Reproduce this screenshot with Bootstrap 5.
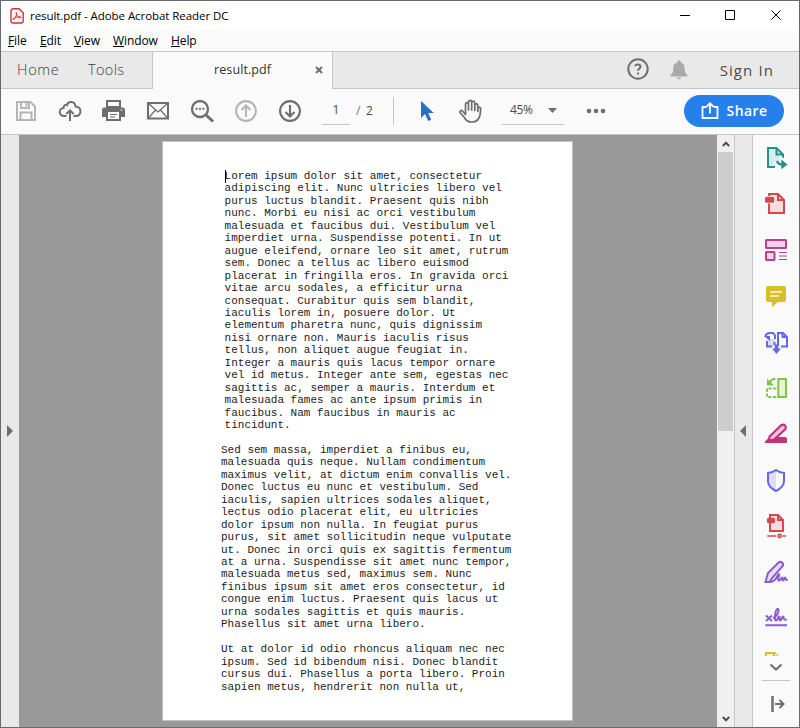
<!DOCTYPE html>
<html lang="en">
<head>
<meta charset="utf-8">
<meta name="viewport" content="width=device-width, initial-scale=1">
<title>result.pdf - Adobe Acrobat Reader DC</title>
<link rel="stylesheet" href="https://cdn.jsdelivr.net/npm/bootstrap@5.3.0/dist/css/bootstrap.min.css">
<style>
  body { font-family: "Open Sans", "Noto Sans", sans-serif; color: #000; }
  svg { display: block; flex: none; overflow: visible; }
  .app-window { height: 728px; border: 1px solid #6b696b; background: #fafafa; }
  .title-row { height: 30px; background: #fff; font-size: 11.5px; padding-left: 9px; padding-right: 17px; }
  .title-text { margin-left: 6px; letter-spacing: -.06px; }
  .menu-row { height: 20px; font-size: 12px; padding-left: 7px; }
  .menu-row a { color: #000; letter-spacing: -.1px; }
  .menu-file { width: 32px; }
  .menu-edit { width: 34px; }
  .menu-view { width: 39px; }
  .menu-window { width: 58px; }
  .tab-row { height: 38px; background: #e9e9e9; border-top: 1px solid #c6c6c6; }
  .tab-rest { border-bottom: 1px solid #c6c6c6; }
  .tab-left { width: 152px; border-right: 1px solid #c6c6c6; padding-left: 16px; font-size: 14.5px; color: #3c3c3c; }
  .tab-left span { font-weight: 300; letter-spacing: .35px; }
  .tab-left .tab-home { width: 71px; letter-spacing: .7px; }
  .tab-file { width: 180px; background: #fafafa; border-right: 1px solid #c6c6c6; font-size: 12.5px; letter-spacing: .1px; color: #323232; padding-left: 61px; padding-right: 9px; }
  .tab-right { padding-right: 25px; color: #4b4b4b; }
  .bell { margin-left: 21px; }
  .sign-in { margin-left: 32px; font-size: 15px; letter-spacing: 1.1px; }
  .tool-row { height: 46px; padding: 0 15px 2px 13px; color: #6e6e6e; border-bottom: 1px solid #c6c6c6; font-size: 12px; }
  .tool-icons { gap: 20px; }
  .field { height: 28px; border-bottom: 1px solid #c6c6c6; color: #4b4b4b; }
  .field-page { width: 28px; margin-left: 20px; }
  .page-slash { width: 10px; margin-left: 6px; }
  .page-total { width: 27px; color: #4b4b4b; }
  .field-zoom { width: 62px; margin-left: 20px; padding: 0 7px 0 8px; letter-spacing: -.4px; }
  .tool-rule { width: 1px; height: 28px; background: #c6c6c6; }
  .pointer { margin-left: 26px; }
  .hand { margin-left: 23px; }
  .more { margin-left: 22px; }
  .share-btn { width: 100px; height: 32px; background: #2680eb; color: #fff; font-size: 14px; font-weight: 600; padding: 0; }
  .share-label { letter-spacing: .4px; }
  .side-strip { width: 18px; background: #e9e9e9; color: #6e6e6e; }
  .side-strip.strip-right { width: 17px; }
  .arrow-right { margin-left: 6px; }
  .arrow-left { margin-left: 5px; }
  .canvas { background: #999; padding: 6px 0 6px 143px; }
  .sheet { width: 411px; height: 580px; background: #fff; border: 1px solid #c2c2c2; padding: 28px 0 0 58px; }
  .sheet pre { font: 11px/12.45px "Liberation Mono", "Courier New", monospace; color: #1c1c1c; margin: 0 0 12.45px; overflow: visible; }
  .sheet pre.first { margin-left: 3.6px; }
  .caret { width: 1px; height: 13px; background: #000; left: 225px; top: 170px; }
  .scroller { width: 18px; background: #f0f0f0; border-right: 1px solid #c6c6c6; }
  .scroll-up { margin: 6px 0 5px; }
  .scroll-down { margin-bottom: 5px; }
  .scroll-thumb { height: 279px; width: 15px; background: #cdcdcd; }
  .tool-pane { width: 47px; border-left: 1px solid #c6c6c6; background: #fafafa; }
  .pane-list { height: 521px; padding-top: 11px; gap: 22px; overflow: hidden; }
  .pane-list svg { width: 24px; height: 24px; }
  .pane-rule { width: 28px; height: 1px; background: #c6c6c6; margin-top: 9px; }
  .pane-more { margin-top: 7px; }
  .pane-collapse { margin: 15px 0 0 4px; }
</style>
</head>
<body class="overflow-hidden">
<div class="app-window d-flex flex-column">
  <header class="title-row d-flex align-items-center">
    <svg width="14" height="16" viewBox="0 0 14 16"><path d="M3 .8h6.200l4 4V13a2 2 0 0 1-2 2H3a2 2 0 0 1-2-2V2.800a2 2 0 0 1 2-2Z" fill="#fff2f2" stroke="#cb3438" stroke-width="1.400"/><path d="M3.200 11.500c1-.2 3.500-3.500 3.600-6.200.1-1.200-1-1-.8 0 .5 2.500 3 5 4.800 4.600 1-.4 0-1.300-1.400-1.200-2 .1-4.500 1-6 2.100-.9.600-.7.900-.2.700Z" fill="none" stroke="#c8353a"/></svg>
    <span class="title-text text-nowrap">result.pdf - Adobe Acrobat Reader DC</span>
    <svg class="ms-auto" width="104" height="12" viewBox="0 0 104 12" fill="none" stroke="#000"><path d="M2 5.500h10M47.500.5h9v9h-9zM93.500.5l9 9M102.500.5l-9 9"/></svg>
  </header>
  <nav class="menu-row d-flex align-items-center">
    <a class="menu-file text-decoration-none"><u>F</u>ile</a>
    <a class="menu-edit text-decoration-none"><u>E</u>dit</a>
    <a class="menu-view text-decoration-none"><u>V</u>iew</a>
    <a class="menu-window text-decoration-none"><u>W</u>indow</a>
    <a class="text-decoration-none"><u>H</u>elp</a>
  </nav>
  <div class="tab-row d-flex">
    <div class="tab-left tab-rest d-flex align-items-center"><span class="tab-home">Home</span><span>Tools</span></div>
    <div class="tab-file d-flex align-items-center justify-content-between"><span>result.pdf</span>
      <svg class="mb-1" width="8" height="8" viewBox="0 0 8 8"><path d="M1 2l6 6M7 2l-6 6" stroke="#6e6e6e" stroke-width="2"/></svg></div>
    <div class="tab-right tab-rest flex-grow-1 d-flex align-items-center justify-content-end">
      <svg class="mb-1" width="22" height="22" viewBox="0 -1 22 22" fill="none" stroke="#6e6e6e" stroke-width="2"><circle cx="11" cy="11" r="9.700"/><path d="M8.200 8.200C8.600 5.800 13.600 5.800 13.500 8.500c0 2-2.400 2-2.400 4.200M11.100 14.500v2"/></svg>
      <svg class="bell" width="18" height="20" viewBox="0 0 18 20" fill="#a9a9a9"><path d="M7.300 2.500V1q1.700-1.400 3.400 0v1.500c3.300.8 4 3.500 4 6.500 0 3 .6 4.500 2.800 6v1.500H.5V15c2.200-1.500 2.800-3 2.800-6 0-3 .7-5.700 4-6.500ZM6.300 17.500h5.400Q9 21 6.300 17.500Z"/></svg>
      <span class="sign-in">Sign In</span>
    </div>
  </div>
  <div class="tool-row d-flex align-items-center">
    <div class="tool-icons d-flex">
      <svg width="24" height="24" viewBox="0 0 24 24" fill="none" stroke="#b5b5b5" stroke-width="2"><path d="M3 3h13.500L21 7.500V21H3ZM7 3v6h8V3M6.500 21v-7.500h11V21"/><path d="M12.500 4v3.500"/></svg>
      <svg width="24" height="24" viewBox="0 0 24 24" fill="none" stroke="#6e6e6e" stroke-width="2"><path d="M8.500 17H6a4 4 0 0 1-.5-8C5.500 6 8 5.200 9 6c.8-4 8-4.500 8.500 1.500C24 7.500 24 17 18 17h-2.500M12 22V11.500M8.300 15l3.700-3.700 3.700 3.700"/></svg>
      <svg width="24" height="24" viewBox="0 0 24 24" fill="#6e6e6e"><path d="M4 1h15v6H4zM2.500 8.500h18A2.500 2.500 0 0 1 23 11v7h-4v4H4v-4H0v-7a2.500 2.500 0 0 1 2.500-2.500Z"/><path d="M6 3h11v4H6zM6 13h11v7H6z" fill="#fafafa"/><path d="M8 15h7v1H8zM8 17.500h5v1H8zM4 7h15v2H4z"/><path d="M18.500 10.500h2v1h-2z" fill="#fafafa"/></svg>
      <svg width="24" height="24" viewBox="0 0 24 24" fill="none" stroke="#6e6e6e"><path d="M2 4h20v15.500H2z" stroke-width="2"/><path d="M2.500 4.500 12 13l9.500-8.500M2.500 19l7-8M21.500 19l-7-8" stroke-width="1.300"/></svg>
      <svg width="24" height="24" viewBox="0 0 24 24" fill="none" stroke="#6e6e6e"><circle cx="10" cy="10" r="8" stroke-width="2.300"/><path d="m15.500 15.500 7.500 7" stroke-width="3"/><path d="M5.600 9.800h2M9 9.800h2M12.400 9.800h2" stroke-width="2"/></svg>
      <svg width="24" height="24" viewBox="0 0 24 24" fill="none" stroke="#b5b5b5" stroke-width="2.100"><circle cx="12" cy="12" r="9.900"/><path d="M12 18V6.500M7.500 11 12 6.500l4.500 4.500"/></svg>
      <svg width="24" height="24" viewBox="0 0 24 24" fill="none" stroke="#6e6e6e" stroke-width="2.100"><circle cx="12" cy="12" r="9.900"/><path d="M12 6v11.500M7.500 13l4.500 4.500 4.500-4.500"/></svg>
    </div>
    <div class="field field-page d-flex align-items-center justify-content-center">1</div>
    <span class="page-slash">/</span><span class="page-total">2</span>
    <div class="tool-rule"></div>
    <svg class="pointer" width="15" height="22" viewBox="0 0 15 22"><path d="M1 1v17l4-4 3.200 7 3-1.300-3-6.700h5.600Z" fill="#2271c9"/></svg>
    <svg class="hand" width="24" height="24" viewBox="0 0 24 24" fill="none" stroke="#6e6e6e" stroke-width="1.700" stroke-linecap="round" stroke-linejoin="round"><path d="M7.500 12.500V5.200c0-2 3-2 3 0V11 3c0-2.300 3.200-2.300 3.200 0v8-7.300c0-2.200 3.100-2.200 3.100 0V11.500 6.300c0-2 3-2 3 0V12.500l.2-3c.2-1.700 2.800-1.600 2.700.3l-.5 5c-.6 5-3.500 8.200-8.700 8.200-4.500 0-6-2-7.500-5L2 13.500c-.8-1.700 1.500-2.800 2.700-1.200L7.500 15.500Z"/></svg>
    <div class="field field-zoom d-flex align-items-center justify-content-between"><span>45%</span>
      <svg width="9" height="5" viewBox="0 0 9 5"><path d="M0 0h9L4.500 5Z" fill="#6e6e6e"/></svg></div>
    <svg class="more" width="20" height="6" viewBox="0 0 20 6" fill="#6e6e6e"><circle cx="3" cy="3" r="2.300"/><circle cx="10" cy="3" r="2.300"/><circle cx="17" cy="3" r="2.300"/></svg>
    <button class="share-btn btn rounded-pill border-0 ms-auto d-flex align-items-center justify-content-center">
      <svg class="me-2" width="18" height="18" viewBox="0 0 18 18" fill="none" stroke="#fff" stroke-width="1.800"><path d="M5.500 5H1.500V16h15V5h-4M9 11.500V2M5.800 4.500 9 1.300 12.200 4.500"/></svg><span class="share-label">Share</span>
    </button>
  </div>
  <main class="d-flex flex-grow-1 overflow-hidden">
    <div class="side-strip d-flex align-items-center"><svg class="arrow-right" width="6" height="12" viewBox="0 0 6 12"><path d="M0 0v12l6-6Z" fill="#6e6e6e"/></svg></div>
    <div class="canvas flex-grow-1">
      <article class="sheet">
<pre class="first">Lorem ipsum dolor sit amet, consectetur
adipiscing elit. Nunc ultricies libero vel
purus luctus blandit. Praesent quis nibh
nunc. Morbi eu nisi ac orci vestibulum
malesuada et faucibus dui. Vestibulum vel
imperdiet urna. Suspendisse potenti. In ut
augue eleifend, ornare leo sit amet, rutrum
sem. Donec a tellus ac libero euismod
placerat in fringilla eros. In gravida orci
vitae arcu sodales, a efficitur urna
consequat. Curabitur quis sem blandit,
iaculis lorem in, posuere dolor. Ut
elementum pharetra nunc, quis dignissim
nisi ornare non. Mauris iaculis risus
tellus, non aliquet augue feugiat in.
Integer a mauris quis lacus tempor ornare
vel id metus. Integer ante sem, egestas nec
sagittis ac, semper a mauris. Interdum et
malesuada fames ac ante ipsum primis in
faucibus. Nam faucibus in mauris ac
tincidunt.</pre>
<pre>Sed sem massa, imperdiet a finibus eu,
malesuada quis neque. Nullam condimentum
maximus velit, at dictum enim convallis vel.
Donec luctus eu nunc et vestibulum. Sed
iaculis, sapien ultrices sodales aliquet,
lectus odio placerat elit, eu ultricies
dolor ipsum non nulla. In feugiat purus
purus, sit amet sollicitudin neque vulputate
ut. Donec in orci quis ex sagittis fermentum
at a urna. Suspendisse sit amet nunc tempor,
malesuada metus sed, maximus sem. Nunc
finibus ipsum sit amet eros consectetur, id
congue enim luctus. Praesent quis lacus ut
urna sodales sagittis et quis mauris.
Phasellus sit amet urna libero.</pre>
<pre>Ut at dolor id odio rhoncus aliquam nec nec
ipsum. Sed id bibendum nisi. Donec blandit
cursus dui. Phasellus a porta libero. Proin
sapien metus, hendrerit non nulla ut,</pre>
      </article>
    </div>
    <div class="scroller d-flex flex-column align-items-center">
      <svg class="scroll-up" width="8" height="6" viewBox="0 0 8 6"><path d="m.8 5 3.200-3.300L7.200 5" fill="none" stroke="#505050" stroke-width="2"/></svg>
      <div class="scroll-thumb"></div>
      <svg class="scroll-down mt-auto" width="8" height="6" viewBox="0 0 8 6"><path d="m.8 1 3.200 3.300L7.200 1" fill="none" stroke="#505050" stroke-width="2"/></svg>
    </div>
    <div class="side-strip strip-right d-flex align-items-center"><svg class="arrow-left" width="6" height="12" viewBox="0 0 6 12"><path d="M6 0v12L0 6Z" fill="#6e6e6e"/></svg></div>
    <aside class="tool-pane d-flex flex-column align-items-center">
      <div class="pane-list d-flex flex-column">
        <svg viewBox="0 0 24 24" fill="none" stroke="#23918c" stroke-width="2"><path d="M11 21H4V2h8.500L19 8.500V13" fill="#d5eeec"/><path d="M12.500 2v6.500H19"/><path d="M12 15.500q1 3 6 3h1M18 14l5 4.500-5 4.200Z" stroke="#fafafa" stroke-width="4.500"/><path d="M13 15q1 3.500 6 3.500" stroke-width="2.500"/><path d="m17.300 13.500 6.200 5-6.200 4.700Z" fill="#23918c" stroke="none"/></svg>
        <svg viewBox="0 0 24 24" fill="none" stroke="#d7474f" stroke-width="2"><path d="M5 21V2h9l6 6v13Z" fill="#f8dcde"/><path d="M14 2v6h6"/><rect x=".5" y="4" width="10.500" height="7.500" rx="1.500" fill="#fafafa" stroke="none"/><rect x="1" y="4.800" width="9.300" height="6" rx="1.500" fill="#d7474f" stroke="none"/></svg>
        <svg viewBox="0 0 24 24" fill="#f6cfe8" stroke="#b7408f" stroke-width="2"><rect x="2" y="2" width="20" height="8" rx=".5"/><rect x="2" y="14" width="8.500" height="8" rx=".5"/><path d="M15 14.500h8M15 18h8M15 21.500h8" stroke-width="1.200"/></svg>
        <svg viewBox="0 0 24 24"><path d="M4 2h16q2 0 2 2v12q0 2-2 2h-6l-6 5v-5H4q-2 0-2-2V4q0-2 2-2Z" fill="#d9bd2b"/><path d="M6 8h12M6 12h9" stroke="#fffbd0" stroke-width="1.600"/></svg>
        <svg viewBox="0 0 24 24" fill="none" stroke="#6767e4" stroke-width="2"><path d="M3 9h8v7H3z" fill="#dcdcf8" stroke="none"/><path d="M1.500 7q0-4 5-4H9l2 2.500V9M14 16V3h5l4 4v9.500h-6M18.500 3v4H23M3 11v5.500h5M10.500 12v3"/><path d="M0 6h6v5Z" fill="#6767e4" stroke="none"/><path d="M12.500 14.500v5" stroke-width="3.500"/><path d="M8 18.500h9L12.500 24Z" fill="#6767e4" stroke="none"/></svg>
        <svg viewBox="0 0 24 24" fill="none" stroke="#82c341" stroke-width="2"><rect x="14.300" y="3" width="7.700" height="18" fill="#e4f4d5"/><path d="M12.500 12.500H3V21h9.500" stroke-dasharray="3.200 1.600"/><path d="M11.500 3q-4-.5-6 4"/><path d="M3 2.500v7h7Z" fill="#82c341" stroke="none"/></svg>
        <svg viewBox="0 0 24 24"><path d="M1 21v-1.500L5 15.500 9 18l4-3h8q2 0 2 2v4Z" fill="#c9307e"/><path d="M5.500 14.500 17.500 3q2-1 3.500.5t.5 3.500L10 17.500l-5 1Z" fill="#f4c6df" stroke="#c9307e" stroke-width="2.200"/></svg>
        <svg viewBox="0 0 24 24"><path d="M12 2Q8 5 4 5v8q0 6 8 10Z" fill="#dedef8"/><path d="M12 2Q8 5 4 5v8q0 6 8 10 8-4 8-10V5q-4 0-8-3Z" fill="none" stroke="#6767e4" stroke-width="2"/></svg>
        <svg viewBox="0 0 24 24" fill="none" stroke="#d7474f" stroke-width="2"><path d="M6 17V1h8l5 5v11Z" fill="#f8dcde"/><path d="M14 1v5h5"/><rect x="3" y="3.700" width="8" height="5.500" rx="1.500" fill="#d7474f" stroke="none"/><path d="M3.300 22h9M18.500 22H22" stroke-width="1.700"/><circle cx="15.700" cy="22" r="1.600" fill="#f8dcde" stroke-width="1.600"/></svg>
        <svg viewBox="0 0 24 24" fill="none" stroke="#8b5ccf" stroke-width="2"><path d="M1.500 22 4 13 14.500 2.500q2-1.300 3.700.2t.3 3.500L8.500 17.500 5.500 22Z" fill="#e7dcf7"/><path d="M1.500 22H6c5 0 7-5 8-7 1-1.500 1.500-1 1 1-.7 2-1.500 5 .2 4.500 1.500-.5 2-3 3-3 .8 0-.2 3 .8 3 1.200 0 1.300-3 2.200-3 .8 0-.2 3 2.500 2.500"/></svg>
        <svg viewBox="0 0 24 24" fill="none" stroke="#8b5ccf" stroke-width="2"><path d="m2 9.500 6 5.500M8 9.500 2 15M1.300 19.200H23"/><path d="M9 12c4-1 6-6 5.500-8.500-.5-2-2.500 0-3 3-.7 3.500-1 8 .5 8 1.700 0 2-4 3.200-4 1.200.2-.5 3.800 1 4 1.500 0 1.700-4.300 3-4 1 .2-.8 4 3.500 3"/></svg>
        <svg viewBox="0 0 24 24" fill="#fbf3bf" stroke="#d9bd2b" stroke-width="2"><path d="M2 12V1h8.500l5 5v6Z"/><path d="M10 1v5h6"/></svg>
      </div>
      <svg class="pane-more" width="14" height="8" viewBox="0 0 14 8"><path d="m1.500 1.500 5.500 5 5.500-5" fill="none" stroke="#6e6e6e" stroke-width="2.100"/></svg>
      <div class="pane-rule"></div>
      <svg class="pane-collapse" width="14" height="16" viewBox="0 0 14 16" fill="none" stroke="#6e6e6e" stroke-width="2"><path d="M1.500 0v16" stroke-width="2.500"/><path d="M4 8h8M8.500 4l4 4-4 4"/></svg>
    </aside>
  </main>
  <div class="caret position-absolute"></div>
</div>
<script src="https://cdn.jsdelivr.net/npm/bootstrap@5.3.0/dist/js/bootstrap.bundle.min.js"></script>
</body>
</html>
